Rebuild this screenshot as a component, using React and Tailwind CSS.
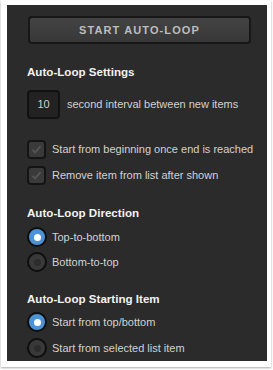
import React from 'react';

function Check() {
  return (
    <div className="w-[19px] h-[19px] rounded-[4px] border-2 border-[#141414] bg-[#3a3a3a] flex items-center justify-center shrink-0">
      <svg width="13" height="13" viewBox="0 0 13 13">
        <path d="M2.5 6.8 L5.2 9.4 L10.5 3.2" fill="none" stroke="#555" strokeWidth="1.8" />
      </svg>
    </div>
  );
}

function Radio({ on }) {
  return (
    <div
      className={
        'w-[20px] h-[20px] rounded-full border-2 border-[#0e0e0e] flex items-center justify-center shrink-0 ' +
        (on ? 'bg-[#4b92d6]' : 'bg-[#393939]')
      }
    >
      <div className={'w-[7px] h-[7px] rounded-full ' + (on ? 'bg-white' : 'bg-[#2c2c2c]')} />
    </div>
  );
}

function Heading({ children, className }) {
  return <div className={'text-[11.6px] leading-[14px] font-bold text-[#f2f2f2] ' + className}>{children}</div>;
}

export default function App() {
  return (
    <div className="w-[273px] h-[370px] bg-white font-['Liberation_Sans',Arial,sans-serif]">
      <div className="ml-[1px] w-[270px] h-[367px] bg-white shadow-[0_1px_2px_rgba(0,0,0,0.35)] pt-[5px] pl-[6px]">
        <div className="w-[260px] h-[356px] bg-[#2b2b2b] overflow-hidden pt-[11px] pl-[20px] text-[11px] text-[#d2d2d2]">
          <button className="ml-[1px] w-[223px] h-[28px] rounded-[4px] border-2 border-[#171717] bg-gradient-to-b from-[#434343] to-[#383838] text-[11px] font-bold tracking-[1.1px] text-[#bdbdbd] flex items-center justify-center">
            START AUTO-LOOP
          </button>

          <Heading className="mt-[21px]">Auto-Loop Settings</Heading>
          <div className="mt-[11px] flex items-center">
            <div className="w-[33px] h-[29px] rounded-[4px] border-2 border-[#121212] bg-[#222222] flex items-center justify-center text-[#d0d0d0]">
              10
            </div>
            <span className="ml-[7px]">second interval between new items</span>
          </div>

          <div className="mt-[21px] flex items-center gap-[6px]">
            <Check />
            <span>Start from beginning once end is reached</span>
          </div>
          <div className="mt-[7px] flex items-center gap-[6px]">
            <Check />
            <span>Remove item from list after shown</span>
          </div>

          <Heading className="mt-[21px]">Auto-Loop Direction</Heading>
          <div className="mt-[7px] flex items-center gap-[5px]">
            <Radio on />
            <span>Top-to-bottom</span>
          </div>
          <div className="mt-[5px] flex items-center gap-[5px]">
            <Radio />
            <span>Bottom-to-top</span>
          </div>

          <Heading className="mt-[20px]">Auto-Loop Starting Item</Heading>
          <div className="mt-[6px] flex items-center gap-[5px]">
            <Radio on />
            <span>Start from top/bottom</span>
          </div>
          <div className="mt-[6px] flex items-center gap-[5px]">
            <Radio />
            <span>Start from selected list item</span>
          </div>
        </div>
      </div>
    </div>
  );
}
